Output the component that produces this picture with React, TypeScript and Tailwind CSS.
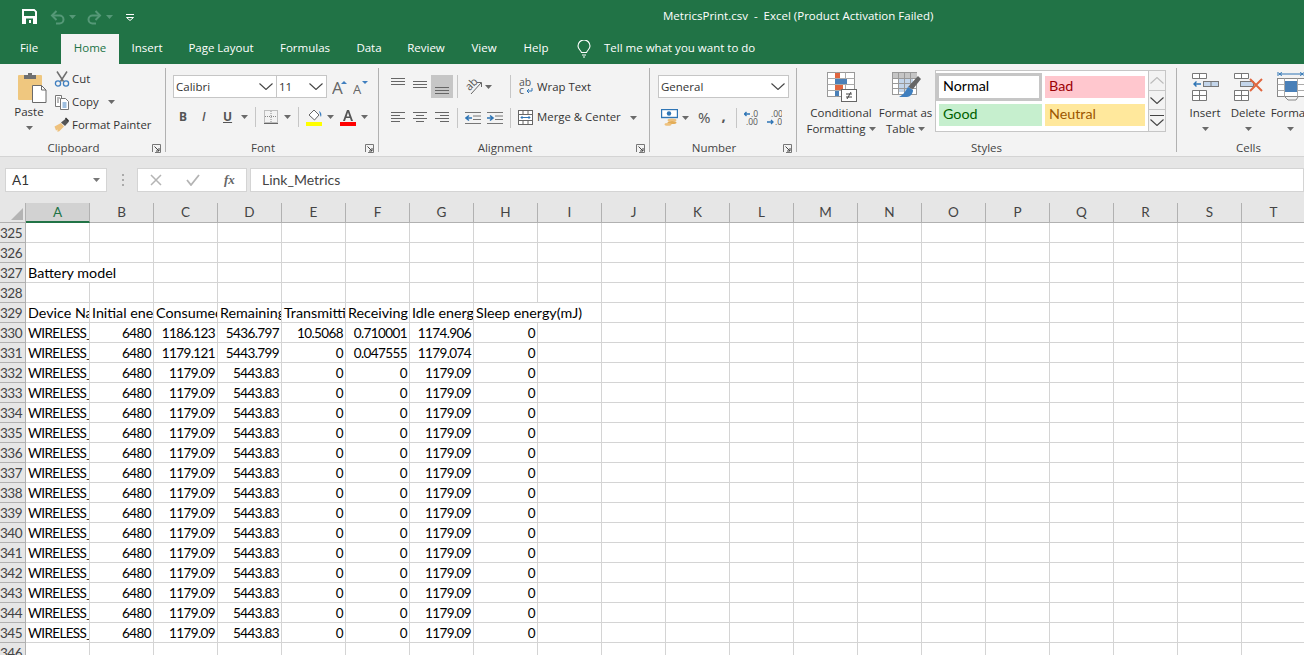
import React from "react";

const UI = "font-['Open_Sans','Noto_Sans',sans-serif]";
const SHEET = "font-['Lato','Noto_Sans',sans-serif]";

const Caret = ({ c = "#6a6a6a", className = "" }: { c?: string; className?: string }) => (
  <svg width="7" height="4" viewBox="0 0 7 4" className={"shrink-0 " + className}><path d="M0 0h7L3.5 4z" fill={c} /></svg>
);
const Chevron = ({ up = false, c = "#444", w = 14, h = 7 }: { up?: boolean; c?: string; w?: number; h?: number }) => (
  <svg width={w} height={h} viewBox="0 0 14 7"><path d={up ? "M0.5 6.5L7 0.5l6.5 6" : "M0.5 0.5L7 6.5l6.5-6"} fill="none" stroke={c} strokeWidth="1.1" /></svg>
);
const Sep = ({ className = "" }: { className?: string }) => <div className={"w-px bg-[#c6c6c6] shrink-0 " + className} />;
const GroupSep = () => <div className="w-px bg-[#b1b1b1] shrink-0 my-[4px]" />;

const Launcher = () => (
  <svg width="9" height="9" viewBox="0 0 9 9" className="absolute right-[4px] top-[4px]">
    <path d="M0.5 8V0.5H8.5V8.5H3" fill="none" stroke="#777" />
    <path d="M2.5 2.5L7 7M7 4v3H4" fill="none" stroke="#444" />
  </svg>
);

const Group = ({ w, label, launcher = true, children }: { w: string; label: string; launcher?: boolean; children: React.ReactNode }) => (
  <div className={"shrink-0 flex flex-col h-full " + w}>
    <div className="h-[76px] flex">{children}</div>
    <div className={"relative h-[16px] text-[11.5px] leading-[16px] text-center text-[#444] " + (launcher ? "pr-[18px]" : "")}>
      {label}
      {launcher && <Launcher />}
    </div>
  </div>
);

const Lines = ({ ys }: { ys: [number, number, number][] }) => (
  <svg width="14" height="14" viewBox="0 0 14 14" className="shrink-0">
    {ys.map(([x, w, y], i) => <rect key={i} x={x} y={y} width={w} height="1" fill="#666" />)}
  </svg>
);

const SaveIcon = () => (
  <svg width="15" height="15" viewBox="0 0 15 15">
    <path fillRule="evenodd" d="M0 0h12.500L15 2.500V15H0zM2 2v5h11V3l-1-1zM4 9.500V15h7V9.500z" fill="#fff" />
    <rect x="7" y="11" width="2" height="3" fill="#fff" />
  </svg>
);
const UndoIcon = ({ flip = false }: { flip?: boolean }) => (
  <svg width="16" height="15" viewBox="0 0 16 15" style={flip ? { transform: "scaleX(-1)" } : undefined}>
    <path d="M2 5.500h7.500a4 4 0 0 1 0 8H6" fill="none" stroke="#559877" strokeWidth="2" />
    <path d="M6.500 1L2 5.500l4.500 4.500" fill="none" stroke="#559877" strokeWidth="2" />
  </svg>
);
const PasteIcon = () => (
  <svg width="30" height="31" viewBox="0 0 30 31">
    <rect x="1" y="3" width="24" height="25" rx="1" fill="#efc77f" />
    <path d="M7 7V3h4V1h4v2h4v4z" fill="#6f6f6f" />
    <path d="M15.500 13.500h9l4.500 4.500v12.500H15.500z" fill="#fff" stroke="#6a6a6a" />
    <path d="M24.500 13.500v4.500h4.500" fill="none" stroke="#6a6a6a" />
  </svg>
);
const CutIcon = () => (
  <svg width="16" height="16" viewBox="0 0 16 16">
    <path d="M3 0.500l6.500 10M13 0.500l-6.500 10" stroke="#6f6f6f" strokeWidth="1.5" fill="none" />
    <circle cx="4" cy="12.500" r="2.600" fill="none" stroke="#3f7fbf" strokeWidth="1.3" />
    <circle cx="12" cy="12.500" r="2.600" fill="none" stroke="#3f7fbf" strokeWidth="1.3" />
  </svg>
);
const CopyIcon = () => (
  <svg width="16" height="16" viewBox="0 0 16 16">
    <path d="M1.500 1.500h6v11h-6z" fill="#fff" stroke="#777" />
    <path d="M6.500 4.500h5l3 3v8h-8z" fill="#fff" stroke="#777" />
    <path d="M8.500 9h4M8.500 11h4M8.500 13h4" stroke="#3f7fbf" />
    <path d="M3 4h3M3 6h2M3 8h2" stroke="#777" />
  </svg>
);
const PainterIcon = () => (
  <svg width="16" height="15" viewBox="0 0 16 15">
    <path d="M0.500 9.500L7 6l3 3.500-5 5H3l1-2-2 1z" fill="#eec17d" />
    <path d="M7 5.500l5-4 3 3-4 4.500z" fill="#555" />
    <path d="M11.500 1l3 3" stroke="#333" strokeWidth="1.5" />
  </svg>
);
const GrowA = ({ size, dark = false, blue = "#3f7fbf" }: { size: number; dark?: boolean; blue?: string }) => (
  <svg width="16" height="16" viewBox="0 0 16 16">
    <text x="0" y="15" fontSize={size} fontFamily="Open Sans" fill="#666">A</text>
    <path d={dark ? "M9 2h6l-3 3z" : "M9 5h6l-3-3z"} fill={blue} />
  </svg>
);
const BorderIcon = () => (
  <svg width="14" height="14" viewBox="0 0 14 14">
    <rect x="0.500" y="0.500" width="13" height="12" fill="none" stroke="#888" strokeDasharray="1 1" />
    <path d="M7 1v11M1 6.500h12" stroke="#888" strokeDasharray="1 1" />
    <path d="M0 13.500h14" stroke="#666" />
  </svg>
);
const FillIcon = () => (
  <svg width="17" height="18" viewBox="0 0 17 18">
    <path d="M3 7l5-5 5 5-4.500 5z" fill="#fff" stroke="#666" />
    <path d="M13 3c2 1 3 3 2 6-1-1-1-3-2-6z" fill="#3f7fbf" />
    <rect x="0" y="14" width="16" height="4" fill="#ffff00" />
  </svg>
);
const FontColorIcon = () => (
  <svg width="16" height="18" viewBox="0 0 16 18">
    <path d="M3 13L7 2h2l4 11h-2l-1-3H6l-1 3zM6.600 8.500h2.800L8 4.200z" fill="#555" fillRule="evenodd" />
    <rect x="0" y="14" width="16" height="4" fill="#ff0000" />
  </svg>
);
const OrientIcon = () => (
  <svg width="17" height="17" viewBox="0 0 17 17">
    <text x="0" y="9" fontSize="11" fontFamily="Open Sans" fill="#555" transform="rotate(-45 7 7)">ab</text>
    <path d="M5 16L15 5M11 4.500l4.500 0v4.500" fill="none" stroke="#666" />
  </svg>
);
const IndentIcon = ({ rev = false }: { rev?: boolean }) => (
  <svg width="16" height="14" viewBox="0 0 16 14">
    <path d="M0 1.500h16M8 5h8M8 8.500h8M0 12.500h16" stroke="#777" />
    <path d={rev ? "M0 7h5M3 4.500L6 7 3 9.500" : "M1.500 7H7M4 4.500L1 7l3 2.500"} stroke="#2f75b5" strokeWidth="1.600" fill="none" />
  </svg>
);
const WrapIcon = () => (
  <svg width="15" height="17" viewBox="0 0 15 17">
    <text x="0" y="7.500" fontSize="10.500" fontFamily="Open Sans" fill="#555">ab</text>
    <text x="0" y="16" fontSize="10.500" fontFamily="Open Sans" fill="#555">c</text>
    <path d="M13 10v3H8M10 11l-2 2 2 2" fill="none" stroke="#2f75b5" />
  </svg>
);
const MergeIcon = () => (
  <svg width="15" height="15" viewBox="0 0 15 15">
    <rect x="0.500" y="0.500" width="14" height="14" fill="#fff" stroke="#666" />
    <path d="M0.500 4.500h14M0.500 10.500h14M5 0.500v4M10 0.500v4M5 10.500v4M10 10.500v4" stroke="#666" />
    <path d="M3 7.500h9M4.500 6l-1.500 1.500L4.500 9M10.500 6L12 7.500 10.500 9" fill="none" stroke="#2f75b5" />
  </svg>
);
const MoneyIcon = () => (
  <svg width="17" height="17" viewBox="0 0 17 17">
    <rect x="0.500" y="0.500" width="16" height="8" fill="#fff" stroke="#2f75b5" strokeWidth="1.400" />
    <circle cx="8" cy="4.500" r="2.200" fill="#2f75b5" />
    <ellipse cx="11" cy="11" rx="4.500" ry="1.600" fill="#eec17d" />
    <ellipse cx="11" cy="13.500" rx="4.500" ry="1.600" fill="#e3ad58" />
    <ellipse cx="7" cy="15.400" rx="3.500" ry="1.400" fill="#eec17d" />
  </svg>
);
const DecIcon = ({ rev = false }: { rev?: boolean }) => (
  <svg width="15" height="16" viewBox="0 0 15 16" fontFamily="Open Sans" fontSize="8.500" fill="#555">
    <text x={rev ? 4 : 7} y="7">{rev ? ".00" : ".0"}</text>
    <text x={rev ? 8 : 2} y="15">{rev ? ".0" : ".00"}</text>
    {rev ? <path d="M0 12h6M4 10l2 2-2 2" stroke="#2f75b5" strokeWidth="1.300" fill="none" /> : <path d="M0 4h6M2.500 2L0.500 4l2 2" stroke="#2f75b5" strokeWidth="1.300" fill="none" />}
  </svg>
);
const CondIcon = () => (
  <svg width="31" height="30" viewBox="0 0 31 30">
    <rect x="0.500" y="0.500" width="27" height="24" fill="#fff" stroke="#999" />
    <path d="M9.500 0.500v24M18.500 0.500v24M0.500 6.500h27M0.500 12.500h27M0.500 18.500h27" stroke="#aaa" />
    <rect x="8" y="1" width="5" height="5" fill="#e0663f" />
    <rect x="8" y="7" width="12" height="5" fill="#4a80b8" />
    <rect x="8" y="13" width="8" height="5" fill="#e0663f" />
    <rect x="8" y="19" width="4" height="5" fill="#4a80b8" />
    <rect x="14.500" y="17.500" width="15" height="12" fill="#fff" stroke="#666" />
    <path d="M19 22h6M19 25h6M24 20l-4 7" stroke="#444" fill="none" />
  </svg>
);
const TableIcon = () => (
  <svg width="30" height="30" viewBox="0 0 30 30">
    <rect x="0.500" y="0.500" width="24" height="22" fill="#fff" stroke="#999" />
    <rect x="1" y="1" width="24" height="5" fill="#c5c5c5" />
    <rect x="7" y="6" width="14" height="14" fill="#c3d5ea" />
    <path d="M6.500 0.500v22M12.500 0.500v22M18.500 0.500v22M0.500 6.500h24M0.500 11.500h24M0.500 16.500h24" stroke="#999" />
    <path d="M26 4l3 3-8 10-5-2z" fill="#666" />
    <path d="M16 15l5 3c0 4-3 7-6 7H7c4-2 6-5 9-10z" fill="#3f7fbf" />
  </svg>
);
const InsertIcon = () => (
  <svg width="28" height="29" viewBox="0 0 28 29">
    <path d="M0.500 0.500h14v5h-14zM7.500 0.500v5M0.500 17.500h14v10h-14zM7.500 17.500v10M0.500 22.500h14" fill="#fff" stroke="#777" />
    <rect x="11.500" y="8.500" width="15" height="5" fill="#c3d5ea" stroke="#777" />
    <path d="M19 8.500v5" stroke="#777" />
    <path d="M9 11H2M4.500 8.500L2 11l2.500 2.500" stroke="#2f75b5" strokeWidth="1.400" fill="none" />
  </svg>
);
const DeleteIcon = () => (
  <svg width="30" height="29" viewBox="0 0 30 29">
    <path d="M0.500 0.500h14v5h-14zM7.500 0.500v5M0.500 17.500h14v10h-14zM7.500 17.500v10M0.500 22.500h14" fill="#fff" stroke="#777" />
    <rect x="6.500" y="8.500" width="13" height="5" fill="#c3d5ea" stroke="#777" />
    <path d="M16 6l12 12M28 6L16 18" stroke="#e0663f" strokeWidth="2" />
  </svg>
);
const FormatIcon = () => (
  <svg width="28" height="30" viewBox="0 0 28 30">
    <path d="M1 4v-4M27 4v-4M2 2h24M5 0.500L2 2l3 1.500M23 0.500L26 2l-3 1.500" fill="none" stroke="#2f75b5" />
    <rect x="0.500" y="6.500" width="27" height="18" fill="#fff" stroke="#888" />
    <path d="M7.500 6.500v18M20.500 6.500v18M0.500 12.500h27M0.500 18.500h27" stroke="#aaa" />
    <rect x="8" y="9" width="12" height="11" fill="#4a80b8" />
    <path d="M8 25l3 3h8l2-3" fill="none" stroke="#888" />
  </svg>
);
const BulbIcon = () => (
  <svg width="14" height="18" viewBox="0 0 14 18">
    <path d="M4.500 12.500C3.500 10 1 9 1 6a6 6 0 0 1 12 0c0 3-2.500 4-3.500 6.500zM5 15h4M6 17h2" fill="none" stroke="#fff" strokeWidth="1.100" />
  </svg>
);

const Select = ({ w, text }: { w: string; text: string }) => (
  <div className={"h-[23px] bg-white border border-[#c6c6c6] flex items-center justify-between pl-[2px] pr-[3px] shrink-0 text-[11.5px] text-[#333] " + w}>
    <span>{text}</span>
    <Chevron />
  </div>
);

const BigCommand = ({ w, icon, l1, l2, caretOnL2 }: { w: string; icon: React.ReactNode; l1: string; l2?: string; caretOnL2?: boolean }) => (
  <div className={"shrink-0 flex flex-col items-center pt-[8px] text-[11.5px] leading-[16px] text-[#333] " + w}>
    <div className="h-[30px] flex items-center justify-center pl-[2px]">{icon}</div>
    <div className="mt-[3px] whitespace-nowrap">{l1}</div>
    {caretOnL2 ? (
      <div className="flex items-center gap-[3px] whitespace-nowrap">{l2}<Caret /></div>
    ) : (
      <div className="h-[16px] flex items-center"><Caret /></div>
    )}
  </div>
);

const Clipboard = () => (
  <Group w="w-[165px]" label="Clipboard">
    <div className="ml-[4px] w-[50px] flex flex-col items-center pt-[8px] text-[11.5px] leading-[16px] text-[#333]">
      <div className="pl-[6px]"><PasteIcon /></div>
      <div className="mt-[1px]">Paste</div>
      <div className="mt-[6px]"><Caret /></div>
    </div>
    <div className="flex flex-col pt-[3px] text-[11.4px] text-[#333]">
      {[
        { i: <CutIcon />, t: "Cut", c: false },
        { i: <CopyIcon />, t: "Copy", c: true },
        { i: <PainterIcon />, t: "Format Painter", c: false },
      ].map((r) => (
        <div key={r.t} className="h-[23px] flex items-center whitespace-nowrap">
          <div className="w-[18px] flex justify-start shrink-0">{r.i}</div>
          <span>{r.t}</span>
          {r.c && <Caret className="ml-[9px]" />}
        </div>
      ))}
    </div>
  </Group>
);

const FontGroup = () => (
  <Group w="w-[212px]" label="Font">
    <div className="pl-[7px] pt-[11px] flex flex-col">
      <div className="flex items-center h-[23px]">
        <Select w="w-[104px]" text="Calibri" />
        <Select w="w-[51px] -ml-px" text="11" />
        <div className="ml-[5px]"><GrowA size={17} /></div>
        <div className="ml-[5px]"><GrowA size={13} dark /></div>
      </div>
      <div className="flex items-center h-[23px] mt-[7px] text-[#555]">
        <span className="ml-[6px] w-[8px] font-bold text-[12px] font-['Noto_Sans']">B</span>
        <span className="ml-[15px] w-[7px] italic font-semibold text-[12px]">I</span>
        <span className="ml-[14px] w-[9px] font-bold underline text-[12px]">U</span>
        <Caret className="ml-[9px]" />
        <Sep className="h-[20px] ml-[7px]" />
        <div className="ml-[8px]"><BorderIcon /></div>
        <Caret className="ml-[6px]" />
        <Sep className="h-[20px] ml-[7px]" />
        <div className="ml-[7px]"><FillIcon /></div>
        <Caret className="ml-[4px]" />
        <div className="ml-[6px]"><FontColorIcon /></div>
        <Caret className="ml-[5px]" />
      </div>
    </div>
  </Group>
);

const Alignment = () => (
  <Group w="w-[270px]" label="Alignment">
    <div className="pl-[12px] pt-[11px] flex flex-col">
      <div className="flex items-center h-[23px]">
        <div className="-mt-[6px]"><Lines ys={[[0, 14, 1], [0, 14, 4], [0, 14, 7]]} /></div>
        <div className="ml-[8px] -mt-[3px]"><Lines ys={[[0, 14, 3], [0, 14, 6], [0, 14, 9]]} /></div>
        <div className="ml-[4px] w-[22px] h-[23px] bg-[#c6c6c6] flex items-end justify-center pb-[3px]"><Lines ys={[[0, 14, 6], [0, 14, 9], [0, 14, 12]]} /></div>
        <Sep className="h-[23px] ml-[4px]" />
        <div className="ml-[8px]"><OrientIcon /></div>
        <Caret className="ml-[2px]" />
        <Sep className="h-[23px] ml-[18px]" />
        <div className="ml-[8px]"><WrapIcon /></div>
        <span className="ml-[3px] text-[11.4px] text-[#333] whitespace-nowrap">Wrap Text</span>
      </div>
      <div className="flex items-center h-[23px] mt-[8px]">
        <Lines ys={[[0, 14, 1], [0, 9, 4], [0, 14, 7], [0, 9, 10]]} />
        <div className="ml-[8px]"><Lines ys={[[0, 14, 1], [3, 8, 4], [0, 14, 7], [3, 8, 10]]} /></div>
        <div className="ml-[8px]"><Lines ys={[[0, 14, 1], [5, 9, 4], [0, 14, 7], [5, 9, 10]]} /></div>
        <Sep className="h-[20px] ml-[8px]" />
        <div className="ml-[7px]"><IndentIcon /></div>
        <div className="ml-[6px]"><IndentIcon rev /></div>
        <Sep className="h-[20px] ml-[7px]" />
        <div className="ml-[7px]"><MergeIcon /></div>
        <span className="ml-[4px] pb-[2px] text-[11.4px] text-[#333] whitespace-nowrap">Merge &amp; Center</span>
        <Caret className="ml-[9px]" />
      </div>
    </div>
  </Group>
);

const NumberGroup = () => (
  <Group w="w-[146px]" label="Number">
    <div className="pl-[8px] pt-[11px] flex flex-col">
      <Select w="w-[131px]" text="General" />
      <div className="flex items-center h-[23px] mt-[8px] text-[#555]">
        <div className="ml-[3px]"><MoneyIcon /></div>
        <Caret className="ml-[4px]" />
        <span className="ml-[9px] text-[15px] font-['Noto_Sans'] leading-none">%</span>
        <span className="ml-[11px] w-[6px] text-[15px] font-bold leading-none -mt-[4px]">,</span>
        <Sep className="h-[20px] ml-[9px]" />
        <div className="ml-[7px]"><DecIcon /></div>
        <div className="ml-[8px]"><DecIcon rev /></div>
      </div>
    </div>
  </Group>
);

const StyleBox = ({ className, children }: { className: string; children: string }) => (
  <div className={SHEET + " flex items-center pl-[4px] pb-[3px] text-[14.3px] " + className}>{children}</div>
);

const Styles = () => (
  <Group w="w-[379px]" label="Styles" launcher={false}>
    <BigCommand w="ml-[9px] w-[70px]" icon={<CondIcon />} l1="Conditional" l2="Formatting" caretOnL2 />
    <BigCommand w="w-[59px]" icon={<TableIcon />} l1="Format as" l2="Table" caretOnL2 />
    <div className="mt-[6px] w-[231px] h-[62px] border border-[#c6c6c6] bg-white flex shrink-0">
      <div className="pt-[2px] w-[212px] grid grid-cols-[106px_100px] grid-rows-[28px_22px] gap-x-[3px] gap-y-[3px] items-center">
        <div className={SHEET + " h-[28px] border-[3px] border-[#c6c6c6] flex items-center pl-[4px] pb-[3px] text-[14.3px] text-black"}>Normal</div>
        <StyleBox className="h-[22px] bg-[#ffc7ce] text-[#9c0006]">Bad</StyleBox>
        <StyleBox className="h-[22px] ml-[3px] bg-[#c6efce] text-[#006100]">Good</StyleBox>
        <StyleBox className="h-[22px] bg-[#ffe89c] text-[#9c5700]">Neutral</StyleBox>
      </div>
      <div className="w-[17px] ml-auto flex flex-col border-l border-[#c6c6c6] bg-[#f3f3f3]">
        <div className="h-[20px] flex items-center justify-center border-b border-[#c6c6c6]"><Chevron up c="#bbb" /></div>
        <div className="h-[19px] flex items-center justify-center border-b border-[#c6c6c6]"><Chevron /></div>
        <div className="flex-1 flex flex-col items-center justify-center gap-[3px]">
          <div className="w-[14px] h-px bg-[#444]" />
          <Chevron />
        </div>
      </div>
    </div>
  </Group>
);

const Cells = () => (
  <Group w="w-[143px]" label="Cells" launcher={false}>
    <BigCommand w="ml-[7px] w-[42px]" icon={<InsertIcon />} l1="Insert" />
    <BigCommand w="w-[44px]" icon={<DeleteIcon />} l1="Delete" />
    <BigCommand w="w-[40px]" icon={<FormatIcon />} l1="Format" />
  </Group>
);

const TABS: [string, string][] = [
  ["Insert", "w-[56px]"], ["Page Layout", "w-[92px]"], ["Formulas", "w-[76px]"], ["Data", "w-[52px]"],
  ["Review", "w-[62px]"], ["View", "w-[54px]"], ["Help", "w-[50px]"],
];

const Header = () => (
  <div className="bg-[#217346] text-white h-[64px] shrink-0">
    <div className="h-[34px] flex items-center relative">
      <div className="ml-[22px] -mt-[2px]"><SaveIcon /></div>
      <div className="ml-[13px]"><UndoIcon /></div>
      <Caret c="#559877" className="ml-[3px]" />
      <div className="ml-[10px]"><UndoIcon flip /></div>
      <Caret c="#559877" className="ml-[4px]" />
      <svg width="8" height="7" viewBox="0 0 8 7" className="ml-[13px]"><path d="M0 0.500h8" stroke="#fff" /><path d="M0.500 3.500h7L4 6.500z" fill="none" stroke="#fff" /></svg>
      <div className="ml-[529px] pb-[2px] text-[11.5px] whitespace-pre">MetricsPrint.csv  -  Excel (Product Activation Failed)</div>
    </div>
    <div className="h-[30px] flex items-stretch text-[11.5px]">
      <div className="w-[58px] pb-[2px] flex items-center justify-center text-white">File</div>
      <div className="ml-[3px] w-[58px] pb-[2px] bg-[#f3f3f3] text-[#217346] flex items-center justify-center">Home</div>
      {TABS.map(([t, w]) => (
        <div key={t} className={"flex items-center justify-center pb-[2px] whitespace-nowrap " + w}>{t}</div>
      ))}
      <div className="ml-[16px] flex items-center"><BulbIcon /></div>
      <div className="ml-[13px] pb-[2px] flex items-center whitespace-nowrap">Tell me what you want to do</div>
    </div>
  </div>
);

const Ribbon = () => (
  <div className={"h-[93px] shrink-0 bg-[#f3f3f3] border-b border-[#d4d4d4] flex overflow-hidden " + UI}>
    <Clipboard /><GroupSep />
    <FontGroup /><GroupSep />
    <Alignment /><GroupSep />
    <NumberGroup /><GroupSep />
    <Styles /><GroupSep />
    <Cells />
  </div>
);

const FormulaBar = () => (
  <div className="h-[46px] shrink-0 bg-[#e6e6e6] flex items-start pt-[11px] text-[13.5px] text-[#333]">
    <div className={SHEET + " ml-[5px] w-[102px] h-[24px] bg-white border border-[#d4d4d4] flex items-center justify-between pl-[6px] pr-[6px]"}>
      <span className="pt-[1px]">A1</span><Caret c="#777" />
    </div>
    <div className="ml-[14px] w-[3px] h-[12px] mt-[6px] flex flex-col justify-between items-center">
      <div className="w-[2px] h-[2px] bg-[#aaa]" /><div className="w-[2px] h-[2px] bg-[#aaa]" /><div className="w-[2px] h-[2px] bg-[#aaa]" />
    </div>
    <div className="ml-[13px] w-[110px] h-[24px] bg-white border border-[#d4d4d4] flex items-center">
      <svg width="12" height="12" viewBox="0 0 12 12" className="ml-[12px]"><path d="M1 1l10 10M11 1L1 11" stroke="#b4b4b4" strokeWidth="1.500" /></svg>
      <svg width="14" height="12" viewBox="0 0 14 12" className="ml-[24px]"><path d="M1 6l4 5 8-10" stroke="#b4b4b4" strokeWidth="1.800" fill="none" /></svg>
      <span className="ml-[24px] italic font-['Liberation_Serif',serif] text-[13px] font-bold text-[#666]">fx</span>
    </div>
    <div className={SHEET + " ml-[3px] flex-1 h-[24px] bg-white border border-[#d4d4d4] flex items-center pl-[11px] pb-[2px] text-[14px] text-[#444]"}>Link_Metrics</div>
  </div>
);

const COLS = "ABCDEFGHIJKLMNOPQRST".split("");
type Cell = { t: string; right?: boolean; span?: number; caps?: boolean } | null;

const texts = (arr: string[]): Cell[] => arr.map((t) => ({ t }));
const nums = (arr: (string | number)[]): Cell[] => [{ t: "WIRELESS_", caps: true }, ...arr.map((t) => ({ t: String(t), right: true }))];

const ROWS: { n: number; cells: Cell[] }[] = [
  { n: 325, cells: [] },
  { n: 326, cells: [] },
  { n: 327, cells: [{ t: "Battery model", span: 2 }] },
  { n: 328, cells: [] },
  { n: 329, cells: [...texts(["Device Name", "Initial energy", "Consumed energy", "Remaining energy", "Transmitting energy", "Receiving energy", "Idle energy"]), { t: "Sleep energy(mJ)", span: 2 }] },
  { n: 330, cells: nums([6480, "1186.123", "5436.797", "10.5068", "0.710001", "1174.906", 0]) },
  { n: 331, cells: nums([6480, "1179.121", "5443.799", 0, "0.047555", "1179.074", 0]) },
  ...Array.from({ length: 14 }, (_, i) => ({ n: 332 + i, cells: nums([6480, "1179.09", "5443.83", 0, 0, "1179.09", 0]) })),
  { n: 346, cells: [] },
];

const Row = ({ n, cells }: { n: number; cells: Cell[] }) => {
  const out: React.ReactNode[] = [];
  let col = 0;
  cells.forEach((c, i) => {
    const span = c?.span ?? 1;
    const style = c?.right
      ? "text-right pr-[2px] text-[13.5px] tracking-[-0.6px] leading-[21px]"
      : c?.caps
        ? "text-left pl-[2px] text-[13.5px] tracking-[-0.65px] leading-[21px]"
        : "text-left pl-[2px] text-[14.3px] leading-[19px]";
    out.push(
      <div
        key={i}
        style={{ width: 64 * span }}
        className={"shrink-0 h-[20px] border-r border-b border-[#d4d4d4] overflow-hidden whitespace-nowrap text-black " + style}
      >
        {c?.t}
      </div>
    );
    col += span;
  });
  for (; col < 20; col++) {
    out.push(<div key={"e" + col} className="shrink-0 w-[64px] h-[20px] border-r border-b border-[#d4d4d4]" />);
  }
  return (
    <div className="flex h-[20px]">
      <div className="shrink-0 w-[26px] h-[20px] bg-[#e6e6e6] border-r border-b border-[#b1b1b1] text-right pr-[3px] leading-[21px] tracking-[-0.5px] text-[#444] text-[13.5px]">{n}</div>
      {out}
    </div>
  );
};

const Sheet = () => (
  <div className={SHEET + " flex-1 bg-white overflow-hidden text-[13.5px]"}>
    <div className="flex h-[20px] bg-[#e6e6e6] text-[#444]">
      <div className="shrink-0 w-[26px] h-[20px] border-r border-b border-[#b1b1b1] flex items-end justify-end pr-[2px] pb-[2px]">
        <svg width="12" height="12" viewBox="0 0 12 12"><path d="M12 0v12H0z" fill="#b4b4b4" /></svg>
      </div>
      {COLS.map((c, i) => (
        <div
          key={c}
          className={
            "shrink-0 w-[64px] h-[20px] flex items-center justify-center border-r " +
            (i === 0 ? "bg-[#d2d2d2] text-[#217346] border-b-2 border-b-[#217346] border-r-[#b1b1b1]" : "border-b border-[#b1b1b1]")
          }
        >
          {c}
        </div>
      ))}
    </div>
    {ROWS.map((r) => <Row key={r.n} n={r.n} cells={r.cells} />)}
  </div>
);

export default function App() {
  return (
    <div className={"w-[1304px] h-[655px] overflow-hidden flex flex-col bg-white " + UI}>
      <Header />
      <Ribbon />
      <FormulaBar />
      <Sheet />
    </div>
  );
}
